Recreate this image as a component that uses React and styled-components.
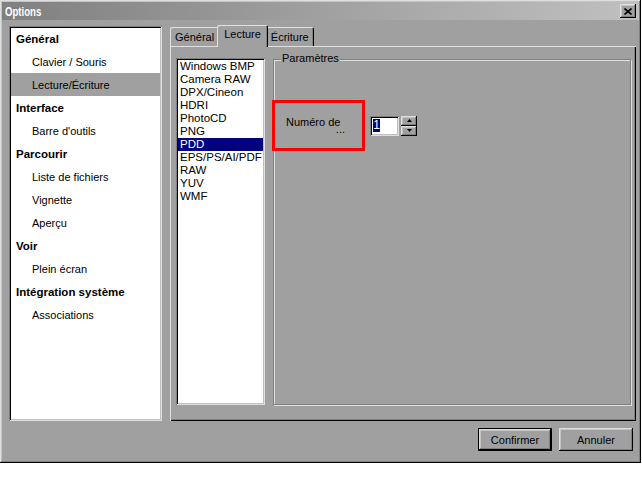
import React from 'react';
import styled, { createGlobalStyle, css } from 'styled-components';

const GlobalStyle = createGlobalStyle`
  body {
    margin: 0;
    background: #fff;
    font-family: "Liberation Sans", Arial, sans-serif;
    font-size: 11px;
    color: #000;
  }
  * { box-sizing: border-box; }
`;

const raised = css`
  box-shadow: inset -1px -1px #000, inset 1px 1px #dfdfdf,
    inset -2px -2px #808080, inset 2px 2px #c4c4c4;
`;

const sunken = css`
  box-shadow: inset 1px 1px #808080, inset -1px -1px #dfdfdf,
    inset 2px 2px #000, inset -2px -2px #c0c0c0;
`;

const Window = styled.div`
  width: 641px;
  height: 463px;
  padding: 2px;
  background: #a0a0a0;
  display: flex;
  flex-direction: column;
  ${raised};
`;

const TitleBar = styled.div`
  height: 18px;
  display: flex;
  align-items: center;
  justify-content: space-between;
  padding: 0 3px 0 3px;
  background: linear-gradient(to right, #808080, #c0c0c0);
  color: #fff;
  font-weight: bold;
  font-size: 13px;
`;

const TitleText = styled.span`
  display: inline-block;
  transform: scaleX(0.74);
  transform-origin: left center;
`;

const CloseButton = styled.div`
  width: 16px;
  height: 14px;
  background: #a0a0a0;
  display: flex;
  align-items: center;
  justify-content: center;
  ${raised};
`;

const Content = styled.div`
  display: flex;
  gap: 8px;
  padding: 6px 3px 0 7px;
  height: 401px;
`;

const Tree = styled.div`
  width: 153px;
  background: #fff;
  padding: 1px 2px 2px 2px;
  ${sunken};
`;

const TreeRow = styled.div`
  height: 23px;
  display: flex;
  align-items: center;
  padding-left: ${p => (p.$child ? 21 : 5)}px;
  font-weight: ${p => (p.$child ? 'normal' : 'bold')};
  font-size: ${p => (p.$child ? 11 : 11.5)}px;
  background: ${p => (p.$selected ? '#a0a0a0' : 'transparent')};
`;

const TabColumn = styled.div`
  flex: 1;
  display: flex;
  flex-direction: column;
`;

const TabBar = styled.div`
  height: 20px;
  display: flex;
  align-items: flex-end;
`;

const Tab = styled.div`
  position: relative;
  height: ${p => (p.$active ? 22 : 19)}px;
  margin: ${p => (p.$active ? '0 -2px -1px -2px' : '0')};
  z-index: ${p => (p.$active ? 1 : 0)};
  padding: ${p => (p.$active ? '3px 7px 0 7px' : '4px 5px 0 5px')};
  background: #a0a0a0;
  border-radius: 2px 2px 0 0;
  box-shadow: inset 1px 1px #dfdfdf, inset -1px 0 #000, inset -2px 0 #808080;
`;

const Panel = styled.div`
  flex: 1;
  display: flex;
  gap: 8px;
  padding: 12px 5px 16px 6px;
  background: #a0a0a0;
  box-shadow: inset 1px 1px #dfdfdf, inset -1px -1px #000,
    inset -2px -2px #808080;
`;

const FormatList = styled.ul`
  width: 89px;
  margin: 0;
  padding: 2px;
  list-style: none;
  background: #fff;
  ${sunken};
`;

const FormatItem = styled.li`
  height: 13px;
  line-height: 13px;
  padding-left: 2px;
  font-size: 11.5px;
  background: ${p => (p.$selected ? '#000080' : 'transparent')};
  color: ${p => (p.$selected ? '#fff' : '#000')};
`;

const Group = styled.div`
  position: relative;
  flex: 1;
  margin-top: 1px;
  padding-top: 40px;
  border: 1px solid #808080;
  box-shadow: inset 1px 1px #dfdfdf, 1px 1px #dfdfdf;
`;

const Legend = styled.span`
  position: absolute;
  top: -8px;
  left: 7px;
  padding: 0 1px;
  line-height: 13px;
  background: #a0a0a0;
`;

const FieldRow = styled.div`
  display: flex;
  align-items: center;
  margin-left: -2px;
`;

const Highlight = styled.div`
  width: 93px;
  height: 51px;
  border: 3px solid #ff0000;
  padding-left: 11px;
  display: flex;
  align-items: center;
`;

const Label = styled.div`
  width: 59px;
  line-height: 7px;
  display: flex;
  flex-direction: column;
`;

const Ellipsis = styled.span`
  text-align: right;
`;

const SpinInput = styled.div`
  width: 29px;
  height: 20px;
  margin-left: 5px;
  padding: 3px 0 0 3px;
  background: #fff;
  ${sunken};
`;

const Selection = styled.span`
  display: inline-block;
  width: 7px;
  height: 13px;
  line-height: 13px;
  background: #000080;
  color: #fff;
  font-size: 12px;
  text-align: center;
`;

const SpinButtons = styled.div`
  width: 16px;
  height: 20px;
  margin-left: 2px;
  display: flex;
  flex-direction: column;
`;

const SpinButton = styled.div`
  height: 10px;
  display: flex;
  align-items: center;
  justify-content: center;
  background: #a0a0a0;
  ${raised};
`;

const Footer = styled.div`
  display: flex;
  justify-content: flex-end;
  gap: 7px;
  padding: 7px 6px 0 0;
`;

const Button = styled.div`
  width: 74px;
  height: 23px;
  display: flex;
  align-items: center;
  justify-content: center;
  background: #a0a0a0;
  ${raised};
  ${p =>
    p.$default &&
    css`
      border: 1px solid #000;
    `}
`;

const tree = [
  { label: 'Général' },
  { label: 'Clavier / Souris', child: true },
  { label: 'Lecture/Écriture', child: true, selected: true },
  { label: 'Interface' },
  { label: "Barre d'outils", child: true },
  { label: 'Parcourir' },
  { label: 'Liste de fichiers', child: true },
  { label: 'Vignette', child: true },
  { label: 'Aperçu', child: true },
  { label: 'Voir' },
  { label: 'Plein écran', child: true },
  { label: 'Intégration système' },
  { label: 'Associations', child: true },
];

const formats = [
  'Windows BMP',
  'Camera RAW',
  'DPX/Cineon',
  'HDRI',
  'PhotoCD',
  'PNG',
  'PDD',
  'EPS/PS/AI/PDF',
  'RAW',
  'YUV',
  'WMF',
];

const Arrow = ({ up }) => (
  <svg width="5" height="3" viewBox="0 0 5 3">
    <polygon points={up ? '0,3 5,3 2.5,0' : '0,0 5,0 2.5,3'} fill="#000" />
  </svg>
);

export default function App() {
  return (
    <>
      <GlobalStyle />
      <Window>
        <TitleBar>
          <TitleText>Options</TitleText>
          <CloseButton>
            <svg width="8" height="7" viewBox="0 0 8 7">
              <path d="M0.5 0.5 L7.5 6.5 M7.5 0.5 L0.5 6.5" stroke="#000" strokeWidth="1.6" />
            </svg>
          </CloseButton>
        </TitleBar>
        <Content>
          <Tree>
            {tree.map(t => (
              <TreeRow key={t.label} $child={t.child} $selected={t.selected}>
                {t.label}
              </TreeRow>
            ))}
          </Tree>
          <TabColumn>
            <TabBar>
              <Tab>Général</Tab>
              <Tab $active>Lecture</Tab>
              <Tab>Écriture</Tab>
            </TabBar>
            <Panel>
              <FormatList>
                {formats.map(f => (
                  <FormatItem key={f} $selected={f === 'PDD'}>
                    {f}
                  </FormatItem>
                ))}
              </FormatList>
              <Group>
                <Legend>Paramètres</Legend>
                <FieldRow>
                  <Highlight>
                    <Label>
                      <span>Numéro de</span>
                      <Ellipsis>...</Ellipsis>
                    </Label>
                  </Highlight>
                  <SpinInput>
                    <Selection>1</Selection>
                  </SpinInput>
                  <SpinButtons>
                    <SpinButton><Arrow up /></SpinButton>
                    <SpinButton><Arrow /></SpinButton>
                  </SpinButtons>
                </FieldRow>
              </Group>
            </Panel>
          </TabColumn>
        </Content>
        <Footer>
          <Button $default>Confirmer</Button>
          <Button>Annuler</Button>
        </Footer>
      </Window>
    </>
  );
}
